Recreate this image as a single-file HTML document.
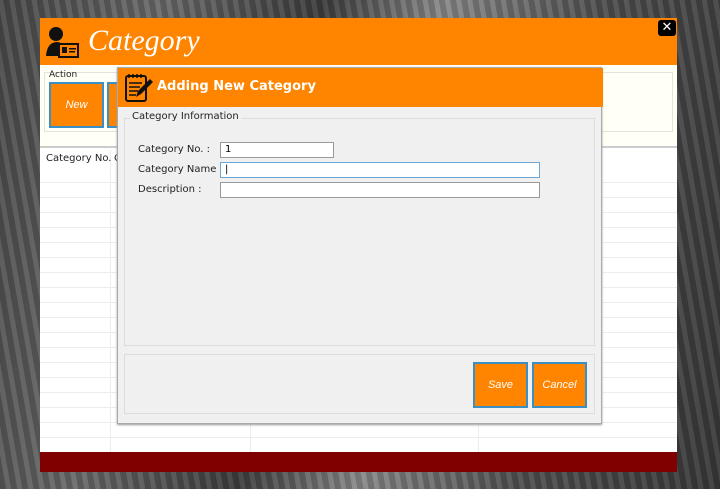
<!DOCTYPE html>
<html><head><meta charset="utf-8"><style>
*{margin:0;padding:0;box-sizing:border-box}
body{width:720px;height:489px;overflow:hidden;position:relative;font-family:"DejaVu Sans","Liberation Sans",sans-serif;background:repeating-linear-gradient(80deg,rgba(0,0,0,.15) 0 6px,rgba(255,255,255,.06) 6px 11px),linear-gradient(100deg,#4a4a4a 0%,#6b6b6b 20%,#3e3e3e 40%,#8a8a8a 55%,#505050 75%,#3a3a3a 100%)}
.abs{position:absolute}
.win{left:40px;top:18px;width:637px;height:454px;background:#fff}
.hdr{left:0;top:0;width:637px;height:47px;background:#ff8500}
.title{left:48px;top:6px;font-family:"Liberation Serif",serif;font-style:italic;font-size:30px;color:#fff}
.cream{left:0;top:47px;width:637px;height:83px;background:#fffff6;border-bottom:2px solid #ccc}
.grp{left:4px;top:7px;width:629px;height:60px;border:1px solid #e4e4dc}
.btn{background:#ff8500;border:2px solid #3a8fc4;color:#fff;font-style:italic;font-family:"Liberation Sans",sans-serif;font-size:11px;display:flex;align-items:center;justify-content:center}
.red{left:0;top:434px;width:637px;height:20px;background:#800000}
.dlg{left:117px;top:67px;width:485px;height:357px;background:#f0f0f0;border:1px solid #aaa;box-shadow:0 1px 2px #999}
.dh{left:0;top:0;width:485px;height:39px;background:#ff8500}
.lbl{font-size:10px;color:#222}
.inp{background:#fff;border:1px solid #999;height:16px;font-size:10px;padding-left:4px;line-height:14px}
</style></head><body>
<div class="abs win">
 <div class="abs hdr">
  <svg class="abs" style="left:6px;top:8px" width="34" height="34" viewBox="0 0 34 34"><circle cx="10" cy="8" r="7" fill="#111"/><path d="M0 30 Q1 17 10 16 Q17 16 20 22 L12 22 L12 30Z" fill="#111"/><rect x="13" y="18" width="19" height="13" fill="#ff8500" stroke="#111" stroke-width="2"/><rect x="16" y="21" width="5" height="6" fill="#111"/><rect x="23" y="22" width="7" height="1.5" fill="#111"/><rect x="23" y="25" width="6" height="1.5" fill="#111"/></svg>
  <div class="abs title">Category</div>
  <div class="abs" style="left:618px;top:2px;width:18px;height:16px;background:#000;border-radius:3px;color:#fff;font-size:13px;font-weight:bold;text-align:center;line-height:16px">✕</div>
 </div>
 <div class="abs cream">
  <div class="abs grp"></div>
  <div class="abs lbl" style="left:9px;top:5px;font-size:9px">Action</div>
  <div class="abs btn" style="left:9px;top:17px;width:55px;height:46px">New</div>
  <div class="abs btn" style="left:67px;top:17px;width:20px;height:46px"></div>
 </div>
 <div class="abs" style="left:0;top:132px;width:637px;height:302px;background:repeating-linear-gradient(to bottom,transparent 0,transparent 14px,#ececec 14px,#ececec 15px);background-position:0 18px"></div>
 <div class="abs" style="left:0;top:132px;width:637px;height:33px;background:#fff;border-bottom:1px solid #ececec"></div>
 <div class="abs" style="left:70px;top:132px;width:1px;height:302px;background:#ececec"></div>
 <div class="abs" style="left:210px;top:132px;width:1px;height:302px;background:#ececec"></div>
 <div class="abs" style="left:438px;top:132px;width:1px;height:302px;background:#ececec"></div>
 <div class="abs lbl" style="left:6px;top:135px">Category No.</div>
 <div class="abs lbl" style="left:74px;top:135px">C</div>
 <div class="abs red"></div>
</div>
<div class="abs dlg">
 <div class="abs dh">
  <svg class="abs" style="left:6px;top:4px" width="30" height="31" viewBox="0 0 30 31"><rect x="2" y="4" width="20" height="25" rx="2" fill="#ff8500" stroke="#111" stroke-width="2"/><path d="M5 2v4M9 2v4M13 2v4M17 2v4" stroke="#111" stroke-width="1.5"/><path d="M5 11h13M5 15h11M5 19h9M5 23h7" stroke="#111" stroke-width="1.5"/><path d="M12 25 L14 19 L26 7 L29 10 L17 22Z" fill="#111"/></svg>
  <div class="abs" style="left:39px;top:11px;color:#fff;font-size:13px;font-weight:600">Adding New Category</div>
 </div>
 <div class="abs" style="left:6px;top:50px;width:471px;height:228px;border:1px solid #dcdcdc"></div>
 <div class="abs lbl" style="left:12px;top:43px;background:#f0f0f0;padding:0 2px">Category Information</div>
 <div class="abs lbl" style="left:20px;top:76px">Category No. :</div>
 <div class="abs lbl" style="left:20px;top:96px">Category Name :</div>
 <div class="abs lbl" style="left:20px;top:116px">Description :</div>
 <div class="abs inp" style="left:102px;top:74px;width:114px">1</div>
 <div class="abs inp" style="left:102px;top:94px;width:320px;border-color:#6aa7d6">|</div>
 <div class="abs inp" style="left:102px;top:114px;width:320px"></div>
 <div class="abs" style="left:6px;top:286px;width:471px;height:60px;border:1px solid #dcdcdc"></div>
 <div class="abs btn" style="left:355px;top:294px;width:55px;height:46px">Save</div>
 <div class="abs btn" style="left:414px;top:294px;width:55px;height:46px">Cancel</div>
</div>
</body></html>
